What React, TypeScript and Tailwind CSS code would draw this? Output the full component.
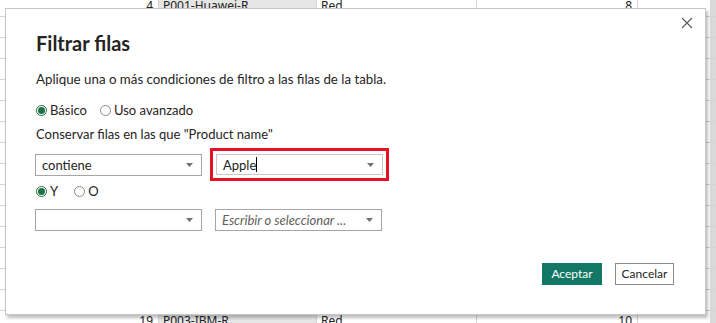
import React from "react";

const F = "font-['Lato','Noto_Sans',sans-serif]";

function Caret() {
  return (
    <svg width="7" height="4" viewBox="0 0 7 4" className="shrink-0">
      <path d="M0 0 L7 0 L3.5 4 Z" fill="#707070" />
    </svg>
  );
}

function Radio({ checked, label }: { checked?: boolean; label: string }) {
  return (
    <div className="flex items-center gap-[3px]">
      {checked ? (
        <span className="w-[11px] h-[11px] rounded-full border border-[#1e7145] flex items-center justify-center">
          <span className="w-[7px] h-[7px] rounded-full bg-[#1e7145]" />
        </span>
      ) : (
        <span className="w-[11px] h-[11px] rounded-full border border-[#8a8a8a]" />
      )}
      <span className="text-[13px] text-[#252423] leading-[16px]">{label}</span>
    </div>
  );
}

function Select({ children, italic }: { children?: React.ReactNode; italic?: boolean }) {
  return (
    <div className="w-[167px] h-[22px] border border-[#a6a6a6] bg-white flex items-center justify-between pl-[6px] pr-[8px]">
      <span className={`text-[13px] leading-[16px] ${italic ? "italic text-[#605e5c]" : "text-[#252423]"}`}>{children}</span>
      <Caret />
    </div>
  );
}

const rows = Array.from({ length: 16 }, (_, i) => i + 4);

export default function App() {
  return (
    <div className={`relative w-[716px] h-[323px] overflow-hidden bg-white ${F}`}>
      {/* background spreadsheet */}
      <div className="-mt-[4px] flex flex-col font-['Noto_Sans',sans-serif]">
        {rows.map((n) => {
          const show = n === 4 || n === 19;
          const name = n === 4 ? "P001-Huawei-R" : "P003-IBM-R";
          const val = n === 4 ? "8" : "10";
          return (
            <div key={n} className="flex h-[21px] border-b border-[#d4d4d4] text-[12px] leading-[20px] text-[#222]">
              <div className="w-[159px] border-r border-[#d4d4d4] text-right pr-[5px]">{show ? n : ""}</div>
              <div className="w-[158px] border-r border-[#d4d4d4] bg-[#e6e6e6] pl-[4px]">{show ? name : ""}</div>
              <div className="w-[160px] border-r border-[#d4d4d4] pl-[4px]">{show ? "Red" : ""}</div>
              <div className="w-[161px] border-r border-[#d4d4d4] text-right pr-[5px]">{show ? val : ""}</div>
              <div className="w-[72px]" />
              <div className="w-[6px] bg-[#dadada]" />
            </div>
          );
        })}
      </div>

      {/* dialog */}
      <div className="absolute left-[5px] top-[8px] w-[701px] h-[307px] bg-white border border-[#c6c6c6] shadow-[2px_3px_3px_rgba(0,0,0,0.25)] flex flex-col pl-[30px] pt-[20px]">
        <button className="absolute right-[11px] top-[7px] w-[14px] h-[14px] flex items-center justify-center">
          <svg width="12" height="12" viewBox="0 0 12 12">
            <path d="M1 1 L11 11 M11 1 L1 11" stroke="#5a5a5a" strokeWidth="1.1" />
          </svg>
        </button>
        <h1 className="text-[20px] leading-[28px] font-bold text-[#252423]">Filtrar filas</h1>
        <p className="mt-[12px] text-[13.3px] leading-[20px] text-[#252423]">
          Aplique una o más condiciones de filtro a las filas de la tabla.
        </p>
        <div className="mt-[13px] flex items-center gap-[13px]">
          <Radio checked label="Básico" />
          <Radio label="Uso avanzado" />
        </div>
        <p className="mt-[8px] text-[13px] leading-[16px] text-[#252423]">
          Conservar filas en las que "Product name"
        </p>
        <div className="mt-[6px] flex items-center gap-[8px] -ml-[1px]">
          <Select>contiene</Select>
          <div className="border-[3px] border-[#e81123] px-[3px] py-[3px]">
            <div className="w-[167px] h-[21px] border border-[#c8c8c8] bg-white flex items-center justify-between pl-[6px] pr-[8px]">
              <span className="text-[13px] leading-[16px] text-[#252423] flex items-center">
                Apple<span className="inline-block w-px h-[15px] bg-black" />
              </span>
              <Caret />
            </div>
          </div>
        </div>
        <div className="mt-[2px] flex items-center gap-[16px]">
          <Radio checked label="Y" />
          <Radio label="O" />
        </div>
        <div className="mt-[10px] flex items-center gap-[13px] -ml-[1px]">
          <Select />
          <Select italic>Escribir o seleccionar ...</Select>
        </div>
        <div className="mt-[32px] flex justify-end gap-[13px] pr-[31px]">
          <button className="w-[60px] h-[22px] bg-[#127865] text-white text-[12px] leading-[16px]">Aceptar</button>
          <button className="w-[59px] h-[22px] border border-[#8a8a8a] bg-white text-[#252423] text-[12px] leading-[16px]">Cancelar</button>
        </div>
      </div>
    </div>
  );
}
